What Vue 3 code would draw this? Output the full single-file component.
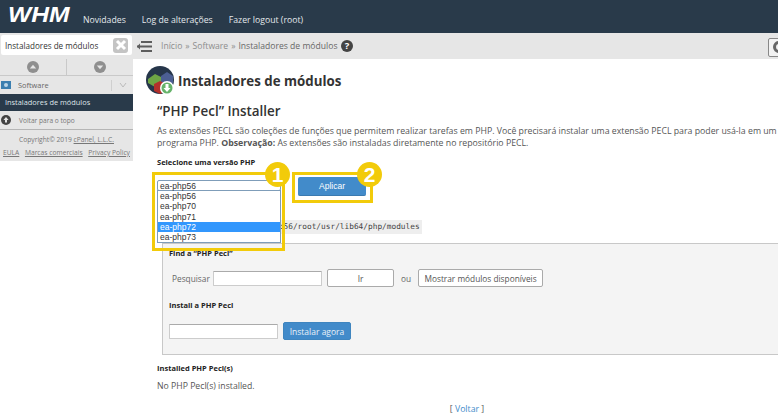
<template>
  <div class="page">
    <header class="top">
      <div class="logo">WHM</div>
      <nav class="topnav"><a>Novidades</a><a>Log de alterações</a><a>Fazer logout (root)</a></nav>
    </header>
    <div class="body">
      <aside class="side">
        <div class="searchwrap">
          <div class="search"><span>Instaladores de módulos</span><i class="clear">
            <svg width="14" height="14" viewBox="0 0 14 14"><path d="M3 3l8 8M11 3l-8 8" stroke="#fff" stroke-width="3"/></svg>
          </i></div>
        </div>
        <div class="arrows">
          <div class="arrowcell"><svg width="12" height="12" viewBox="0 0 12 12"><circle cx="6" cy="6" r="6" fill="#8f8f8f"/><path d="M2.8 7.4L6 3.8l3.2 3.6z" fill="#e6e6e6"/></svg></div>
          <div class="arrowcell"><svg width="12" height="12" viewBox="0 0 12 12"><circle cx="6" cy="6" r="6" fill="#8f8f8f"/><path d="M2.8 4.6L6 8.2l3.2-3.6z" fill="#e6e6e6"/></svg></div>
        </div>
        <div class="group">
          <svg width="10" height="8" viewBox="0 0 10 8"><rect width="10" height="8" fill="#3c7fb0"/><circle cx="5" cy="4" r="2" fill="#bcd6e8"/></svg>
          <span>Software</span>
          <i class="divider"></i>
          <svg class="chev" width="8" height="6" viewBox="0 0 8 6"><path d="M1 1l3 4 3-4" fill="none" stroke="#bbb"/></svg>
        </div>
        <div class="active">Instaladores de módulos</div>
        <div class="backtop">
          <svg width="10" height="10" viewBox="0 0 10 10"><circle cx="5" cy="5" r="5" fill="#444"/><path d="M5 2l2.6 3H6v2.5H4V5H2.4z" fill="#e6e6e6"/></svg>
          <span>Voltar para o topo</span>
        </div>
        <div class="copy">
          <p>Copyright© 2019 <u>cPanel, L.L.C.</u></p>
          <p class="links"><u>EULA</u><u>Marcas comerciais</u><u>Privacy Policy</u></p>
        </div>
      </aside>
      <div class="content">
        <div class="crumbbar">
          <svg class="menu" width="15" height="11" viewBox="0 0 15 11"><path d="M4 0h11v2H4zM0 4.5h15v2H0zM4 9h11v2H4z" fill="#5d5d5d"/><path d="M3 2.5L0 5.5l3 3z" fill="#5d5d5d"/></svg>
          <div class="crumbs">
            <span>Início</span><b>»</b><span>Software</span><b>»</b><span class="cur">Instaladores de módulos</span>
            <svg width="12" height="12" viewBox="0 0 12 12"><circle cx="6" cy="6" r="6" fill="#444"/><text x="6" y="9.3" text-anchor="middle" font-size="9.5" font-weight="700" fill="#fff" font-family="Open Sans">?</text></svg>
          </div>
          <div class="lifebuoy"><svg width="14" height="14" viewBox="0 0 14 14"><circle cx="7" cy="7" r="4.5" fill="none" stroke="#666" stroke-width="3"/></svg></div>
        </div>
        <main class="main">
          <div class="titlerow">
            <svg class="appicon" width="30" height="30" viewBox="0 0 30 30">
              <circle cx="14" cy="14" r="14" fill="#26364a"/>
              <path d="M2 13l7-5 6 3v7l-6 3-7-4z" fill="#6ea545"/>
              <path d="M15 10l6-4 6 4v7l-6 3-6-3z" fill="#4c5f93"/>
              <path d="M8 18l6-3 6 3v7l-6 3-6-3z" fill="#b3302b"/>
              <circle cx="21" cy="22" r="7" fill="#fff"/>
              <circle cx="21" cy="22" r="5.5" fill="#66b36a"/>
              <path d="M19.5 18h3v4h2l-3.5 4-3.5-4h2z" fill="#fff"/>
            </svg>
            <h1>Instaladores de módulos</h1>
          </div>
          <h2>“PHP Pecl” Installer</h2>
          <p class="intro">As extensões PECL são coleções de funções que permitem realizar tarefas em PHP. Você precisará instalar uma extensão PECL para poder usá-la em um<br />programa PHP. <strong>Observação:</strong> As extensões são instaladas diretamente no repositório PECL.</p>
          <h4 class="sel">Selecione uma versão PHP</h4>
          <div class="pickrow">
            <div class="selectbox">
              <div class="seltop">ea-php56</div>
              <ul class="options">
                <li>ea-php56</li><li>ea-php70</li><li>ea-php71</li><li class="on">ea-php72</li><li>ea-php73</li>
              </ul>
            </div>
            <button class="apply">Aplicar</button>
          </div>
          <div class="pathrow"><code>/opt/cpanel/ea-php56/root/usr/lib64/php/modules</code></div>
          <section class="well">
            <h4>Find a “PHP Pecl”</h4>
            <div class="findrow">
              <span class="lbl">Pesquisar</span>
              <input class="f1" />
              <button class="ghost go">Ir</button>
              <span class="or">ou</span>
              <button class="ghost show">Mostrar módulos disponíveis</button>
            </div>
            <h4 class="inst">Install a PHP Pecl</h4>
            <div class="installrow">
              <input class="f2" />
              <button class="primary">Instalar agora</button>
            </div>
          </section>
          <h4 class="installed">Installed PHP Pecl(s)</h4>
          <p class="none">No PHP Pecl(s) installed.</p>
          <p class="back">[ <a>Voltar</a> ]</p>
        </main>
      </div>
    </div>
    <div class="mark m1"></div>
    <div class="mark m2"></div>
    <div class="num n1">1</div>
    <div class="num n2">2</div>
  </div>
</template>

<script setup>
</script>

<style>
html, body { margin: 0; background: #fff; overflow: hidden; }
</style>

<style scoped>
.page { position: relative; width: 778px; height: 417px; overflow: hidden; font-family: "Open Sans", sans-serif; font-size: 8.75px; color: #333; white-space: nowrap; }
.top { height: 33px; background: #293a4a; display: flex; align-items: flex-end; box-sizing: border-box; padding-left: 8px; }
.logo { width: 75px; height: 33px; line-height: 30px; font-family: "Liberation Sans", sans-serif; font-weight: 700; font-style: italic; font-size: 22px; color: #fff; transform: scaleX(1.12); transform-origin: left center; }
.topnav { display: flex; gap: 16px; height: 33px; line-height: 41px; color: #e4e8ec; font-size: 8.7px; }
.body { display: flex; height: 384px; }
.side { width: 133px; flex: none; height: 128px; background: #e6e6e6; }
.searchwrap { height: 26px; box-sizing: border-box; padding: 2px 0 0 1px; }
.search { width: 131px; height: 20px; background: #fff; border-radius: 2px; display: flex; align-items: center; justify-content: space-between; padding: 0 4px; box-sizing: border-box; font-size: 8.1px; color: #333; }
.clear { width: 15px; height: 15px; background: #c4c4c4; border-radius: 3px; display: flex; align-items: center; justify-content: center; }
.arrows { display: flex; height: 17px; border-bottom: 1px solid #c9c9c9; box-sizing: border-box; }
.arrowcell { flex: 1; display: flex; align-items: center; justify-content: center; }
.arrowcell + .arrowcell { border-left: 1px solid #c9c9c9; }
.group { height: 18px; display: flex; align-items: center; padding: 0 6px 0 1px; gap: 7px; color: #666; font-size: 7.4px; }
.group .divider { margin-left: auto; width: 1px; height: 11px; background: #cfcfcf; }
.active { height: 17px; line-height: 17px; background: #293a4a; color: #dfe4e8; padding-left: 5px; font-size: 7.4px; }
.backtop { height: 19px; display: flex; align-items: center; gap: 8px; padding-left: 1px; color: #777; font-size: 6.6px; border-bottom: 1px solid #b5b5b5; box-sizing: border-box; }
.copy { color: #777; font-size: 6.7px; text-align: center; padding-top: 5px; }
.copy p { margin: 0 0 4px; line-height: 9px; }
.links { display: flex; justify-content: space-between; padding: 0 3px; }
.content { flex: 1; min-width: 0; }
.crumbbar { height: 26px; background: #e6e6e6; display: flex; align-items: center; position: relative; }
.menu { margin-left: 4px; }
.crumbs { margin-left: 9px; display: flex; align-items: center; gap: 3px; color: #8d8d8d; font-size: 8.6px; }
.crumbs b { font-weight: 400; }
.crumbs .cur { color: #666; }
.crumbs svg { margin-left: 1px; }
.lifebuoy { position: absolute; left: 635px; top: 5px; width: 16px; height: 17px; background: #f2f2f2; border: 1px solid #888; border-radius: 2px; }
.lifebuoy svg { margin: 1px 0 0 3px; }
.main { padding: 8px 0 0 24px; position: relative; }
.titlerow { display: flex; align-items: center; margin-left: -11px; gap: 2px; height: 28px; }
.appicon { flex: none; }
h1 { margin: 0; font-size: 13.3px; font-weight: 700; color: #333; }
h2 { margin: 7px 0 0; font-size: 13.4px; line-height: 18px; font-weight: 600; color: #333; }
.intro { margin: 5px 0 0; line-height: 12px; color: #555; }
h4 { margin: 0; font-size: 7.5px; font-weight: 700; color: #222; line-height: 10px; }
.sel { margin-top: 8px; }
.pickrow { display: flex; margin-top: 13px; height: 18px; }
.selectbox { width: 124px; position: relative; z-index: 2; }
.seltop { height: 11px; box-sizing: border-box; line-height: 11px; border: 1px solid #7f9db9; border-radius: 2px; padding-left: 2px; font-family: "Liberation Sans", sans-serif; font-size: 8.5px; background: #fff; }
.options { list-style: none; margin: -1px 0 0; padding: 0; background: #fff; border: 1px solid #7f9db9; font-family: "Liberation Sans", sans-serif; font-size: 8.5px; }
.options li { height: 10.3px; line-height: 10.3px; padding-left: 2px; }
.options li.on { background: #3297fd; color: #fff; }
.apply { margin: -3px 0 0 17px; width: 68px; height: 19px; background: #428bca; border: 0; border-bottom: 1px solid #3a7ab0; border-radius: 2px; color: #fff; font-family: "Liberation Sans", sans-serif; font-size: 8.5px; padding: 0; }
.pathrow { margin-top: 22px; height: 15px; }
code { display: inline-block; background: #eee; font-family: "DejaVu Sans Mono", monospace; font-size: 7.8px; line-height: 13px; height: 14px; padding: 0 2px; color: #444; margin-left: 40px; }
.well { margin: 8px 0 0 5px; height: 112px; background: #f4f4f4; border: 1px solid #c8c8c8; box-sizing: border-box; padding: 4px 6px; width: 640px; }
.findrow { display: flex; align-items: center; margin-top: 11px; height: 18px; }
.lbl { margin-left: 3px; color: #666; font-size: 8.3px; width: 41px; }
input { box-sizing: border-box; background: #fff; border: 1px solid #ccc; border-top-color: #aaa; padding: 0; border-radius: 1px; }
.f1 { width: 109px; height: 15px; }
button { font-family: "Open Sans", sans-serif; }
.ghost { background: #fff; border: 1px solid #aaa; border-radius: 2px; color: #555; font-size: 8.3px; height: 18px; padding: 0; }
.go { width: 67px; margin-left: 5px; }
.or { margin: 0 7px; color: #666; font-size: 8.3px; }
.show { width: 125px; }
.inst { margin-top: 13px; }
.installrow { display: flex; align-items: center; margin-top: 12px; }
.f2 { width: 109px; height: 15px; }
.primary { margin-left: 5px; width: 68px; height: 18px; background: #428bca; border: 1px solid #3f85bf; border-radius: 2px; color: #e8f1f8; font-size: 8.5px; padding: 0; }
.installed { margin-top: 8px; }
.none { margin: 7px 0 0; color: #555; font-size: 8.7px; line-height: 12px; }
.back { margin: 11px 0 0; width: 620px; text-align: center; font-size: 8.7px; line-height: 12px; color: #555; }
.back a { color: #428bca; }
.mark { position: absolute; border: 3px solid #f2cb0a; box-sizing: border-box; z-index: 3; }
.m1 { left: 152px; top: 172px; width: 133px; height: 79px; }
.m2 { left: 292px; top: 172px; width: 81px; height: 31px; }
.num { position: absolute; z-index: 4; width: 25px; height: 25px; border-radius: 50%; background: #f2cb0a; color: #fff; text-align: center; font-family: "Liberation Sans", sans-serif; font-weight: 700; font-size: 21px; line-height: 25px; }
.n1 { left: 265px; top: 162px; }
.n2 { left: 357px; top: 162px; }
</style>
